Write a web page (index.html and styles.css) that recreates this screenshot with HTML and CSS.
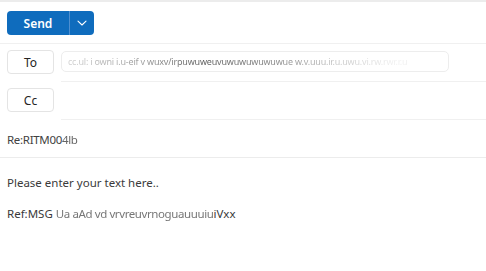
FILE: index.html
```html
<!DOCTYPE html>
<html>
<head>
<meta charset="utf-8">
<link rel="stylesheet" href="styles.css">
</head>
<body>
<div class="page">
  <div class="topline"></div>
  <div class="toolbar">
    <div class="send">
      <span class="send-main">Send</span>
      <span class="send-drop">
        <svg width="12" height="12" viewBox="0 0 12 12"><path d="M2 4.2 L6 8 L10 4.2" fill="none" stroke="#fff" stroke-width="1.1" stroke-linecap="round" stroke-linejoin="round"/></svg>
      </span>
    </div>
  </div>
  <div class="recips">
    <div class="row">
      <div class="btn">To</div>
      <div class="field"><div class="chip"><span class="blur chiptext">cc.ul: i owni i.u-eif  v wuxv/irpuwuweuvuwuwuwuwuwue w.v.uuu.ir.u.uwu.vi.rw.rwr.r.u</span></div></div>
    </div>
    <div class="row">
      <div class="btn">Cc</div>
      <div class="field"></div>
    </div>
  </div>
  <div class="subject">Re:RITM00<span class="blur dim">4lb</span></div>
  <div class="body">
    <p class="line">Please enter your text here..</p>
    <p class="line">Ref:MSG <span class="blur dim light">Ua aAd vd vrvreuvrnoguauuuiu</span>iVxx</p>
  </div>
</div>
</body>
</html>
```

FILE: styles.css
```css
html, body {
  margin: 0;
  padding: 0;
  background: #fff;
}
.page {
  width: 486px;
  height: 271px;
  font-family: "Noto Sans", "Open Sans", sans-serif;
  color: #424242;
  overflow: hidden;
}
.topline {
  height: 2px;
  background: #ececec;
}
.toolbar {
  height: 42px;
  display: flex;
  align-items: flex-start;
  padding: 9px 0 0 7px;
  box-sizing: border-box;
  border-bottom: 1px solid #f0f0f0;
}
.send {
  display: flex;
  height: 24px;
  border-radius: 4px;
  background: #0f6cbd;
  overflow: hidden;
}
.send-main {
  width: 62px;
  display: flex;
  align-items: center;
  justify-content: center;
  color: #fff;
  font-weight: 600;
  font-size: 12px;
  border-right: 1px solid #4f8fd0;
}
.send-drop {
  width: 24px;
  display: flex;
  align-items: center;
  justify-content: center;
}
.recips {
  display: flex;
  flex-direction: column;
}
.row {
  display: flex;
  height: 38px;
  align-items: flex-start;
}
.btn {
  margin: 6px 8px 0 7px;
  width: 45px;
  height: 22px;
  border: 1px solid #e4e4e4;
  border-radius: 4px;
  display: flex;
  align-items: center;
  justify-content: center;
  font-size: 12px;
  color: #242424;
}
.field {
  flex: 1;
  height: 38px;
  border-bottom: 1px solid #f0f0f0;
  box-sizing: border-box;
  margin-left: -1px;
}
.chip {
  margin-top: 7px;
  width: 388px;
  height: 21px;
  border: 1px solid #ededed;
  border-radius: 5px;
  box-sizing: border-box;
  display: flex;
  align-items: center;
  padding-left: 6px;
  overflow: hidden;
}
.blur {
  display: inline-block;
  filter: blur(0.6px);
  white-space: nowrap;
}
.chiptext {
  font-size: 9px;
  letter-spacing: -0.2px;
  background: linear-gradient(90deg, #d0d0d0 0%, #9a9a9a 22%, #5a5a5a 40%, #8a8a8a 62%, #c8c8c8 80%, #f0f0f0 96%);
  -webkit-background-clip: text;
  background-clip: text;
  color: transparent;
}
.dim {
  color: #666;
  letter-spacing: -0.4px;
}
.light {
  color: #777;
}
.subject {
  height: 36px;
  margin-top: 1px;
  border-bottom: 1px solid #ececec;
  display: flex;
  align-items: center;
  padding-left: 7px;
  font-size: 11.5px;
  color: #424242;
  letter-spacing: -0.3px;
}
.body {
  padding: 17px 0 0 7px;
}
.line {
  margin: 0 0 15px 0;
  font-size: 11.5px;
  line-height: 16px;
  color: #3a3a3a;
}
```
